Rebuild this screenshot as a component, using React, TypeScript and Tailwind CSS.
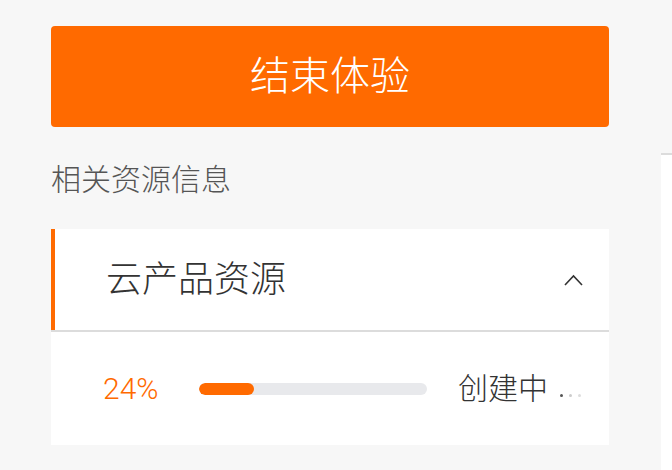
import React from "react";

const font = { fontFamily: '"Roboto", "Noto Sans CJK SC", sans-serif' };

const ProgressRow = ({ percent }: { percent: number }) => {
  return (
    <div className="flex h-[113px] items-center bg-white pl-[52px]">
      <span className="w-[96px] text-[30px] font-light leading-none text-[#ff6a00]">
        {percent}%
      </span>
      <div className="h-[12px] w-[228px] overflow-hidden rounded-full bg-[#e8e9ec]">
        <div
          className="h-full rounded-full bg-[#ff6a00]"
          style={{ width: `${percent}%` }}
        ></div>
      </div>
      <span className="ml-[31px] text-[30px] font-light leading-none text-[#333]">创建中</span>
      <span className="ml-[12px] mt-[14px] flex gap-[6px]">
        <span className="h-[3px] w-[3px] rounded-full bg-[#555]"></span>
        <span className="h-[3px] w-[3px] rounded-full bg-[#ccc]"></span>
        <span className="h-[3px] w-[3px] rounded-full bg-[#ddd]"></span>
      </span>
    </div>
  );
};

export default function App() {
  return (
    <div className="flex h-[470px] w-[672px] overflow-hidden bg-[#f7f7f7]" style={font}>
      <div className="w-[558px] shrink-0 ml-[51px] pt-[26px]">
        <button className="flex h-[101px] w-full items-center justify-center rounded-[4px] bg-[#ff6a00] text-[40px] font-light leading-none text-white">
          结束体验
        </button>

        <div className="flex h-[102px] items-center pt-[4px]">
          <p className="text-[30px] font-light leading-none text-[#555]">相关资源信息</p>
        </div>

        <div className="bg-white">
          <div className="flex h-[101px] items-center justify-between border-l-4 border-[#ff6a00] pl-[51px] pr-[26px]">
            <span className="text-[36px] font-light leading-none text-[#333]">云产品资源</span>
            <svg width="19" height="12" viewBox="0 0 19 12" fill="none">
              <path d="M1 11L9.5 2L18 11" stroke="#333" strokeWidth="1.6" />
            </svg>
          </div>
          <div className="h-[2px] bg-[#dcdcdc]"></div>
          <ProgressRow percent={24} />
        </div>
      </div>

      <div className="ml-[52px] mt-[153px] flex-1 border-t-2 border-[#dcdcdc] bg-white"></div>
    </div>
  );
}
